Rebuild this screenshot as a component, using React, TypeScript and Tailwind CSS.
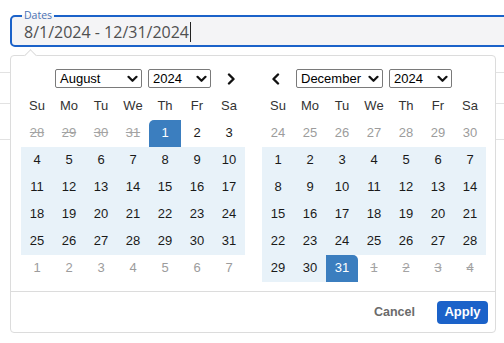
import React from "react";

type Kind = "struck" | "muted" | "range" | "plain" | "start" | "end";
type Cell = { n: number; k: Kind };

const WEEK = ["Su", "Mo", "Tu", "We", "Th", "Fr", "Sa"];

function leftCells(): Cell[] {
  const c: Cell[] = [];
  [28, 29, 30, 31].forEach((n) => c.push({ n, k: "struck" }));
  c.push({ n: 1, k: "start" });
  c.push({ n: 2, k: "plain" });
  c.push({ n: 3, k: "plain" });
  for (let n = 4; n <= 31; n++) c.push({ n, k: "range" });
  for (let n = 1; n <= 7; n++) c.push({ n, k: "muted" });
  return c;
}

function rightCells(): Cell[] {
  const c: Cell[] = [];
  for (let n = 24; n <= 30; n++) c.push({ n, k: "muted" });
  for (let n = 1; n <= 30; n++) c.push({ n, k: "range" });
  c.push({ n: 31, k: "end" });
  for (let n = 1; n <= 4; n++) c.push({ n, k: "struck" });
  return c;
}

const cellClass: Record<Kind, string> = {
  struck: "text-[#a3a3a3] line-through",
  muted: "text-[#9c9c9c]",
  range: "bg-[#e8f2f9] text-[#1a1a1a]",
  plain: "text-[#1a1a1a]",
  start: "bg-[#3b7ebf] text-white rounded-tl-[5px]",
  end: "bg-[#3b7ebf] text-white rounded-tr-[5px]",
};

function Chevron({ dir }: { dir: "left" | "right" }) {
  return (
    <svg width="10" height="12" viewBox="0 0 10 12" fill="none">
      {dir === "right" ? (
        <path d="M3 1.5 L7.5 6 L3 10.5" stroke="#111" strokeWidth="2.4" strokeLinecap="round" strokeLinejoin="round" />
      ) : (
        <path d="M7 1.5 L2.5 6 L7 10.5" stroke="#111" strokeWidth="2.4" strokeLinecap="round" strokeLinejoin="round" />
      )}
    </svg>
  );
}

function Select({ label, w }: { label: string; w: string }) {
  return (
    <div className={`${w} h-[19px] border border-[#7a7a7a] rounded-[2px] bg-white flex items-center justify-between pl-[4px] pr-[3px] text-[13px] text-black leading-none`}>
      <span>{label}</span>
      <svg width="11" height="8" viewBox="0 0 11 8" fill="none">
        <path d="M1.5 1.8 L5.5 5.8 L9.5 1.8" stroke="#111" strokeWidth="2.2" strokeLinecap="round" strokeLinejoin="round" />
      </svg>
    </div>
  );
}

function Calendar({ month, cells, nav }: { month: string; cells: Cell[]; nav: "left" | "right" }) {
  return (
    <div className="w-[224px] flex flex-col">
      <div className="relative h-[19px] flex justify-center gap-[6px]">
        <Select label={month} w="w-[87px]" />
        <Select label="2024" w="w-[63px]" />
        {nav === "right" ? (
          <div className="absolute right-[9px] top-[4px]">
            <Chevron dir="right" />
          </div>
        ) : (
          <div className="absolute left-[9px] top-[4px]">
            <Chevron dir="left" />
          </div>
        )}
      </div>
      <div className="mt-[5px] grid grid-cols-7 h-[27px] items-start pt-[6px] text-[13px] text-[#333] leading-none">
        {WEEK.map((d) => (
          <div key={d} className="text-center">{d}</div>
        ))}
      </div>
      <div className="grid grid-cols-7">
        {cells.map((c, i) => (
          <div key={i} className={`h-[27px] flex items-center justify-center pb-[2px] text-[13px] ${cellClass[c.k]}`}>
            {c.n}
          </div>
        ))}
      </div>
    </div>
  );
}

export default function App() {
  return (
    <div className="relative w-[504px] h-[343px] bg-white overflow-hidden font-['Liberation_Sans',Arial,sans-serif]">
      <div className="pt-[15px] pl-[10px]">
        <div className="relative h-[32px] w-[520px] border-2 border-[#1b62c9] rounded-[5px] bg-[#f4f4f6] flex items-center pl-[12px]">
          <span className="absolute -top-[7px] left-[10px] px-[2px] text-[10.5px] leading-[11px] text-[#4b72b4] font-['Open_Sans',sans-serif] bg-[linear-gradient(to_bottom,white_50%,#f4f4f6_50%)]">
            Dates
          </span>
          <span className="text-[16px] leading-[20px] text-[#505050] font-['Open_Sans',sans-serif] mt-[2px]">8/1/2024 - 12/31/2024</span>
          <span className="w-px h-[20px] bg-[#222] ml-[1px] mt-[2px]" />
        </div>
      </div>
      <div className="flex flex-col">
        <div className="h-[26px] border-b border-[#e2e2e2]" />
        <div className="h-[31px] border-b border-[#e2e2e2]" />
        <div className="h-[36px] border-b border-[#e2e2e2]" />
      </div>

      <div className="absolute left-[10px] top-[55px] w-[486px] h-[278px] border border-[#dcdcdc] rounded-[4px] bg-white flex flex-col">
        <div className="absolute left-[15px] -top-[5px] w-[9px] h-[9px] rotate-45 bg-white border-l border-t border-[#dcdcdc]" />
        <div className="flex gap-[17px] pl-[10px] pt-[13px] pb-[9px] border-b border-[#dcdcdc]">
          <Calendar month="August" cells={leftCells()} nav="right" />
          <Calendar month="December" cells={rightCells()} nav="left" />
        </div>
        <div className="flex-1 flex items-center justify-end gap-[14px] pr-[7px]">
          <button className="px-[8px] h-[23px] text-[12.5px] font-bold text-[#6b6b6b]">Cancel</button>
          <button className="w-[51px] h-[23px] rounded-[4px] bg-[#1b62c9] text-white text-[13px] font-bold">Apply</button>
        </div>
      </div>
    </div>
  );
}
